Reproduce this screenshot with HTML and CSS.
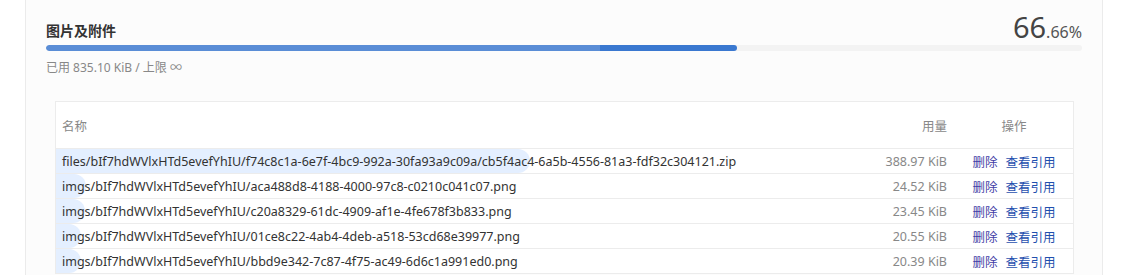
FILE: index.html
```html
<!DOCTYPE html>
<html lang="zh-CN">
<head>
    <meta charset="UTF-8">
    <meta name="viewport" content="width=device-width, initial-scale=1.0">
    <title>图片及附件</title>
    <link rel="stylesheet" href="styles.css">
</head>
<body>
    <div class="panel">
        <div class="usage-head">
            <div class="usage-title">图片及附件</div>
            <div class="usage-percent"><span class="big">66</span>.66%</div>
        </div>
        <div class="usage-bar">
            <div class="seg seg-a" style="width: 53.5%"></div>
            <div class="seg seg-b" style="width: 13.16%"></div>
        </div>
        <div class="usage-note">已用 835.10 KiB / 上限 ∞</div>

        <div class="files">
            <div class="row row-head">
                <div class="cell name">名称</div>
                <div class="cell size">用量</div>
                <div class="cell ops">操作</div>
            </div>
            <div class="row">
                <div class="share" style="width: 46.58%"></div>
                <div class="cell name">files/bIf7hdWVlxHTd5evefYhIU/f74c8c1a-6e7f-4bc9-992a-30fa93a9c09a/cb5f4ac4-6a5b-4556-81a3-fdf32c304121.zip</div>
                <div class="cell size">388.97 KiB</div>
                <div class="cell ops"><a class="del">删除</a><a class="ref">查看引用</a></div>
            </div>
            <div class="row">
                <div class="share" style="width: 2.94%"></div>
                <div class="cell name">imgs/bIf7hdWVlxHTd5evefYhIU/aca488d8-4188-4000-97c8-c0210c041c07.png</div>
                <div class="cell size">24.52 KiB</div>
                <div class="cell ops"><a class="del">删除</a><a class="ref">查看引用</a></div>
            </div>
            <div class="row">
                <div class="share" style="width: 2.81%"></div>
                <div class="cell name">imgs/bIf7hdWVlxHTd5evefYhIU/c20a8329-61dc-4909-af1e-4fe678f3b833.png</div>
                <div class="cell size">23.45 KiB</div>
                <div class="cell ops"><a class="del">删除</a><a class="ref">查看引用</a></div>
            </div>
            <div class="row">
                <div class="share" style="width: 2.46%"></div>
                <div class="cell name">imgs/bIf7hdWVlxHTd5evefYhIU/01ce8c22-4ab4-4deb-a518-53cd68e39977.png</div>
                <div class="cell size">20.55 KiB</div>
                <div class="cell ops"><a class="del">删除</a><a class="ref">查看引用</a></div>
            </div>
            <div class="row">
                <div class="share" style="width: 2.44%"></div>
                <div class="cell name">imgs/bIf7hdWVlxHTd5evefYhIU/bbd9e342-7c87-4f75-ac49-6d6c1a991ed0.png</div>
                <div class="cell size">20.39 KiB</div>
                <div class="cell ops"><a class="del">删除</a><a class="ref">查看引用</a></div>
            </div>
        </div>
    </div>
</body>
</html>
```

FILE: styles.css
```css
body {
    font-family: "Noto Sans", "Noto Sans CJK SC", sans-serif;
    margin: 0;
    background-color: #fff;
    color: #333;
    overflow: hidden;
}
.panel {
    margin-left: 25px;
    width: 1036px;
    height: 258px;
    padding: 17px 20px 0 20px;
    background-color: #fcfcfc;
    border-left: 1px solid #ebebeb;
    border-right: 1px solid #ebebeb;
}
.usage-head {
    display: flex;
    justify-content: space-between;
    align-items: flex-end;
    height: 27px;
}
.usage-title {
    font-size: 14px;
    font-weight: bold;
    color: #333;
    line-height: 20px;
    margin-bottom: 3px;
}
.usage-percent {
    font-size: 16px;
    color: #555;
    line-height: 24px;
}
.usage-percent .big {
    font-size: 29px;
    color: #444;
}
.usage-bar {
    display: flex;
    height: 6px;
    margin-top: 1px;
    background-color: #f3f3f3;
    border-radius: 3px;
    overflow: hidden;
}
.seg {
    height: 100%;
}
.seg-a {
    background-color: #5a8dd6;
    border-radius: 3px 0 0 3px;
}
.seg-b {
    background-color: #3a78d0;
    border-radius: 0 3px 3px 0;
}
.usage-note {
    margin-top: 7px;
    font-size: 12px;
    color: #888;
}
.files {
    margin: 25px 8px 0 9px;
    background-color: #fff;
    border: 1px solid #ececec;
    border-bottom: none;
}
.row {
    position: relative;
    display: grid;
    grid-template-columns: 1fr 110px 120px;
    align-items: center;
    height: 24px;
    border-bottom: 1px solid #ececec;
    font-size: 12.5px;
}
.row-head {
    height: 46px;
    color: #888;
}
.share {
    position: absolute;
    left: 0;
    top: 0;
    bottom: 0;
    background-color: #e4efff;
    border-radius: 0 13px 13px 0;
}
.cell {
    position: relative;
    white-space: nowrap;
}
.name {
    padding-left: 6px;
    color: #333;
}
.row-head .name {
    color: #888;
}
.size {
    text-align: right;
    padding-right: 6px;
    color: #888;
}
.ops {
    text-align: center;
    padding-left: 2px;
}
.ops a {
    cursor: pointer;
}
.del {
    color: #3f40a6;
    margin-right: 8px;
}
.ref {
    color: #1f4fae;
}
```
